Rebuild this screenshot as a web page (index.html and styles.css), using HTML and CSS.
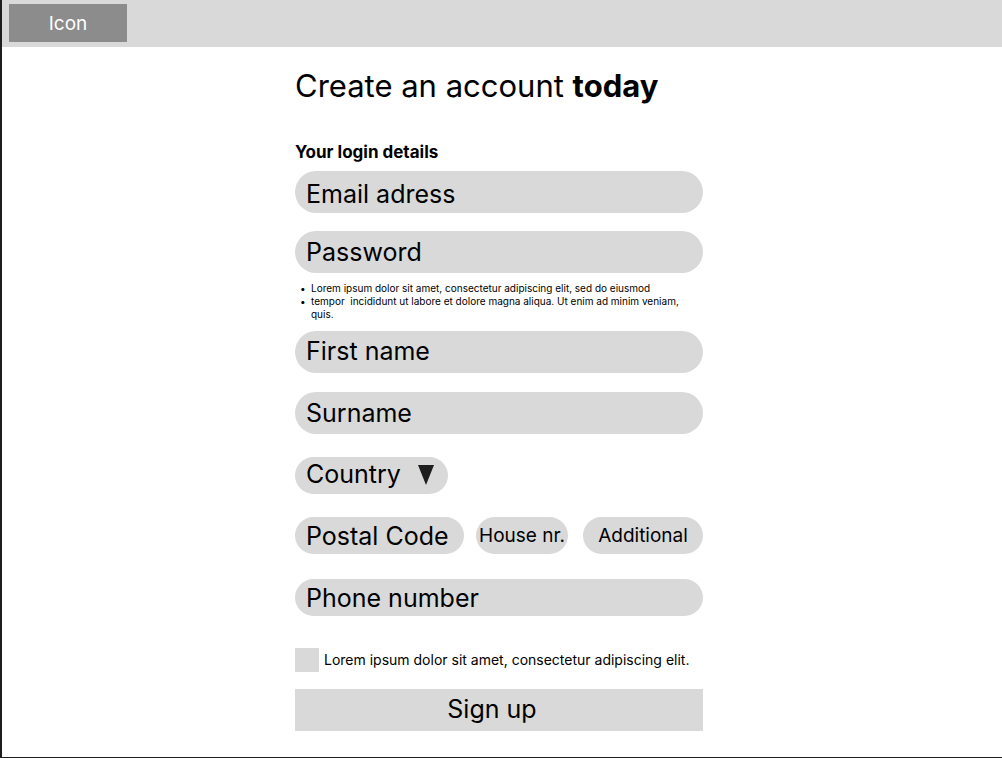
FILE: index.html
```html
<!DOCTYPE html>
<html lang="en">
<head>
<meta charset="utf-8">
<meta name="viewport" content="width=device-width, initial-scale=1">
<title>Create an account</title>
<link rel="stylesheet" href="styles.css">
</head>
<body class="page">
  <header class="topbar">
    <a class="logo" href="#">Icon</a>
  </header>
  <main class="content">
    <form class="signup">
      <h1 class="title">Create an account <strong>today</strong></h1>
      <h2 class="subtitle">Your login details</h2>
      <input class="field email" type="email" placeholder="Email adress" aria-label="Email adress">
      <input class="field password" type="password" placeholder="Password" aria-label="Password">
      <ul class="hints">
        <li>Lorem ipsum dolor sit amet, consectetur adipiscing elit, sed do eiusmod</li>
        <li>tempor&nbsp; incididunt ut labore et dolore magna aliqua. Ut enim ad minim veniam, quis.</li>
      </ul>
      <input class="field first-name" type="text" placeholder="First name" aria-label="First name">
      <input class="field surname" type="text" placeholder="Surname" aria-label="Surname">
      <div class="country">
        <select class="field compact country-select" aria-label="Country">
          <option>Country</option>
        </select>
        <svg class="arrow" viewBox="0 0 16 20" aria-hidden="true"><path d="M0 0H16L8 20Z" fill="#1e1e1e"/></svg>
      </div>
      <div class="address">
        <input class="field compact postal" type="text" placeholder="Postal Code" aria-label="Postal Code">
        <input class="field compact small house" type="text" placeholder="House nr." aria-label="House nr.">
        <input class="field compact small additional" type="text" placeholder="Additional" aria-label="Additional">
      </div>
      <input class="field compact phone" type="tel" placeholder="Phone number" aria-label="Phone number">
      <label class="terms">
        <input class="tick" type="checkbox">
        <span>Lorem ipsum dolor sit amet, consectetur adipiscing elit.</span>
      </label>
      <button class="submit" type="submit">Sign up</button>
    </form>
  </main>
</body>
</html>
```
FILE: styles.css
```css
* {
  box-sizing: border-box;
}

.page {
  display: flex;
  flex-direction: column;
  min-height: 100vh;
  margin: 0;
  border-left: 2px solid #1e1e1e;
  border-bottom: 1px solid #1e1e1e;
  background: #fff;
  color: #000;
  font-family: Inter, "Liberation Sans", sans-serif;
}

.topbar {
  display: flex;
  padding: 4px 7px 5px;
  background: #d9d9d9;
}

.logo {
  width: 118px;
  padding-top: 1px;
  background: #8c8c8c;
  color: #fff;
  font-size: 19px;
  line-height: 37px;
  text-align: center;
  text-decoration: none;
}

.content {
  display: flex;
  justify-content: center;
  padding: 19px 6px 26px 0;
}

.signup {
  display: flex;
  flex-direction: column;
  width: 100%;
  max-width: 408px;
}

.title {
  margin: 0;
  font-size: 31px;
  font-weight: 400;
  line-height: 40px;
  white-space: nowrap;
}

.title strong {
  font-weight: 700;
}

.subtitle {
  margin: 36px 0 9px;
  font-size: 17px;
  font-weight: 700;
  line-height: 20px;
}

.field {
  width: 100%;
  height: 42px;
  margin: 0;
  padding: 0 11px;
  border: 0;
  border-radius: 21px;
  background: #d9d9d9;
  color: #000;
  font-family: inherit;
  font-size: 25px;
}

.field::placeholder {
  color: #000;
  opacity: 1;
}

.compact {
  height: 37px;
}

.small {
  padding: 0;
  font-size: 19px;
  text-align: center;
}

.email {
  padding-top: 3px;
}

.password {
  margin-top: 18px;
}

.hints {
  margin: 9px 0 10px;
  padding-left: 16px;
  font-size: 10px;
  line-height: 13px;
  list-style-type: "•\00a0\00a0";
}

.first-name {
  padding-bottom: 3px;
}

.surname {
  margin-top: 19px;
}

.country {
  position: relative;
  width: 153px;
  margin-top: 23px;
}

.country-select {
  display: block;
  padding-bottom: 3px;
  appearance: none;
}

.arrow {
  position: absolute;
  top: 8px;
  right: 14px;
  width: 16px;
  height: 20px;
  pointer-events: none;
}

.address {
  display: flex;
  gap: 12px;
  margin-top: 23px;
}

.postal {
  flex: 1;
  min-width: 0;
}

.house {
  width: 92px;
  margin-right: 3px;
}

.additional {
  width: 120px;
}

.phone {
  margin-top: 25px;
}

.terms {
  display: flex;
  align-items: center;
  gap: 5px;
  margin: 32px 0 17px;
  font-size: 14px;
  line-height: 24px;
  white-space: nowrap;
}

.tick {
  flex: none;
  width: 24px;
  height: 24px;
  margin: 0;
  appearance: none;
  background: #d9d9d9;
}

.tick:checked {
  background: #8c8c8c;
}

.submit {
  height: 42px;
  padding: 0 14px 2px 0;
  border: 0;
  background: #d9d9d9;
  color: #000;
  font-family: inherit;
  font-size: 25px;
}
```
